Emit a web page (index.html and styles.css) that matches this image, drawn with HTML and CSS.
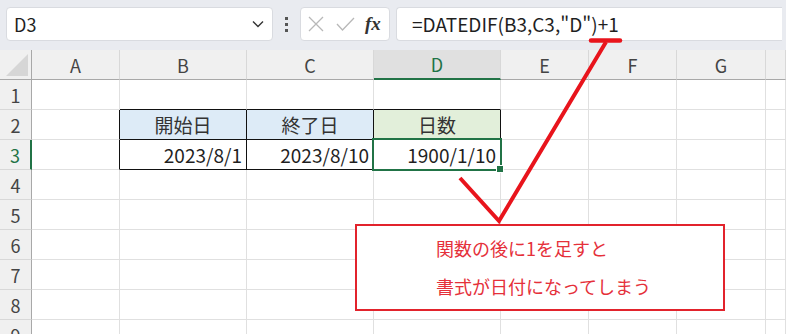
FILE: index.html
```html
<!DOCTYPE html>
<html lang="ja">
<head>
    <meta charset="UTF-8">
    <meta name="viewport" content="width=device-width, initial-scale=1.0">
    <title>DATEDIF</title>
    <link rel="stylesheet" href="styles.css">
</head>
<body>
    <div class="app">
        <div class="toolbar">
            <div class="namebox">
                <span>D3</span>
                <svg class="chevron" width="12" height="8" viewBox="0 0 12 8"><path d="M1 1.5 L6 6.5 L11 1.5" fill="none" stroke="#333" stroke-width="1.4"/></svg>
            </div>
            <div class="dots"><i></i><i></i><i></i></div>
            <div class="fxbox">
                <svg width="16" height="16" viewBox="0 0 16 16"><path d="M1 1 L15 15 M15 1 L1 15" stroke="#b8b8b8" stroke-width="1.3" fill="none"/></svg>
                <svg width="19" height="14" viewBox="0 0 19 14"><path d="M1 7 L6.5 13 L18 1" stroke="#b8b8b8" stroke-width="1.3" fill="none"/></svg>
                <span class="fx">fx</span>
            </div>
            <div class="formula">=DATEDIF(B3,C3,"D")+1</div>
        </div>

        <div class="sheet">
            <div class="hd corner"></div>
            <div class="hd col">A</div>
            <div class="hd col">B</div>
            <div class="hd col">C</div>
            <div class="hd col active">D</div>
            <div class="hd col">E</div>
            <div class="hd col">F</div>
            <div class="hd col">G</div>
            <div class="hd col"></div>

            <div class="hd row">1</div>
            <div class="c"></div>
            <div class="c tb"></div>
            <div class="c tb"></div>
            <div class="c tb"></div>
            <div class="c"></div><div class="c"></div><div class="c"></div><div class="c"></div>

            <div class="hd row">2</div>
            <div class="c tl"></div>
            <div class="c box blue center">開始日</div>
            <div class="c box blue center">終了日</div>
            <div class="c box green center">日数</div>
            <div class="c"></div><div class="c"></div><div class="c"></div><div class="c"></div>

            <div class="hd row active">3</div>
            <div class="c tl"></div>
            <div class="c box num">2023/8/1</div>
            <div class="c box num">2023/8/10</div>
            <div class="c box num selected">1900/1/10</div>
            <div class="c"></div><div class="c"></div><div class="c"></div><div class="c"></div>

            <div class="hd row">4</div>
            <div class="c"></div><div class="c"></div><div class="c"></div><div class="c"></div><div class="c"></div><div class="c"></div><div class="c"></div><div class="c"></div>
            <div class="hd row">5</div>
            <div class="c"></div><div class="c"></div><div class="c"></div><div class="c"></div><div class="c"></div><div class="c"></div><div class="c"></div><div class="c"></div>
            <div class="hd row">6</div>
            <div class="c"></div><div class="c"></div><div class="c"></div><div class="c"></div><div class="c"></div><div class="c"></div><div class="c"></div><div class="c"></div>
            <div class="hd row">7</div>
            <div class="c"></div><div class="c"></div><div class="c"></div><div class="c"></div><div class="c"></div><div class="c"></div><div class="c"></div><div class="c"></div>
            <div class="hd row">8</div>
            <div class="c"></div><div class="c"></div><div class="c"></div><div class="c"></div><div class="c"></div><div class="c"></div><div class="c"></div><div class="c"></div>
            <div class="hd row">9</div>
            <div class="c"></div><div class="c"></div><div class="c"></div><div class="c"></div><div class="c"></div><div class="c"></div><div class="c"></div><div class="c"></div>
        </div>

        <!-- annotation drawn over the sheet -->
        <svg class="arrow" width="786" height="334" viewBox="0 0 786 334">
            <polyline points="460,178 499,221 606,42" fill="none" stroke="#e8141c" stroke-width="4" stroke-linejoin="miter"/>
            <line x1="591" y1="40.5" x2="620" y2="40.5" stroke="#e8141c" stroke-width="4.5" stroke-linecap="round"/>
        </svg>
        <div class="note">
            <p>関数の後に1を足すと</p>
            <p>書式が日付になってしまう</p>
        </div>
    </div>
</body>
</html>
```

FILE: styles.css
```css
body {
    margin: 0;
    font-family: "Noto Sans CJK JP", "Noto Sans", sans-serif;
    color: #1f1f1f;
    background-color: white;
}
.app {
    position: relative;
    width: 786px;
    height: 334px;
    overflow: hidden;
}
.toolbar {
    display: flex;
    height: 50px;
    box-sizing: border-box;
    padding: 7px 0 0 6px;
    background-color: #e9ebf0;
}
.namebox {
    display: flex;
    align-items: center;
    justify-content: space-between;
    box-sizing: border-box;
    width: 267px;
    height: 34px;
    padding: 0 8px 0 7px;
    background-color: white;
    border: 1px solid #d9dbe0;
    border-radius: 4px;
    font-size: 18px;
}
.dots {
    display: flex;
    flex-direction: column;
    align-items: center;
    justify-content: center;
    gap: 3px;
    width: 27px;
    height: 34px;
}
.dots i {
    display: block;
    width: 3px;
    height: 3px;
    background-color: #555;
}
.fxbox {
    display: flex;
    align-items: center;
    gap: 12px;
    box-sizing: border-box;
    width: 90px;
    height: 34px;
    padding-left: 7px;
    background-color: white;
    border: 1px solid #d9dbe0;
    border-radius: 4px;
}
.fx {
    font-family: "Liberation Serif", serif;
    font-style: italic;
    font-weight: bold;
    font-size: 19px;
    color: #333;
    margin-left: -2px;
}
.formula {
    box-sizing: border-box;
    width: 386px;
    height: 34px;
    margin-left: 6px;
    padding-left: 15px;
    line-height: 32px;
    background-color: white;
    border: 1px solid #d9dbe0;
    border-right: none;
    border-radius: 4px 0 0 4px;
    font-size: 19px;
}
.sheet {
    display: grid;
    grid-template-columns: 32px 88px 127px 127px 127px 88px 88px 89px 1fr;
    grid-template-rows: 30px;
    grid-auto-rows: 30px;
}
.hd {
    display: flex;
    align-items: center;
    justify-content: center;
    box-sizing: border-box;
    background-color: #f0f0f0;
    color: #444;
    font-size: 18px;
}
.col {
    border-right: 1px solid #d8d8d8;
    border-bottom: 1px solid #a8a8a8;
}
.col.active {
    background-color: #e0e0e0;
    color: #217346;
    border-bottom: 2px solid #217346;
}
.row {
    border-right: 1px solid #a8a8a8;
    border-bottom: 1px solid #d8d8d8;
}
.row.active {
    color: #217346;
    border-right: 2px solid #217346;
}
.corner {
    position: relative;
    border-right: 1px solid #a8a8a8;
    border-bottom: 1px solid #a8a8a8;
}
.corner::after {
    content: "";
    position: absolute;
    right: 3px;
    bottom: 3px;
    border-style: solid;
    border-width: 0 0 22px 22px;
    border-color: transparent transparent #d6d6d6 transparent;
}
.c {
    display: flex;
    align-items: center;
    box-sizing: border-box;
    border-right: 1px solid #e0e0e0;
    border-bottom: 1px solid #e0e0e0;
    font-size: 19px;
}
.tb {
    border-bottom-color: #111;
}
.tl {
    border-right-color: #111;
}
.box {
    border-right-color: #111;
    border-bottom-color: #111;
}
.blue {
    background-color: #ddebf7;
}
.green {
    background-color: #e2efda;
}
.center {
    justify-content: center;
    color: #333;
}
.num {
    justify-content: flex-end;
    padding-right: 4px;
}
.selected {
    position: relative;
}
.selected::before {
    content: "";
    position: absolute;
    top: -2px;
    left: -2px;
    right: -2px;
    bottom: -2px;
    border: 2px solid #217346;
}
.selected::after {
    content: "";
    position: absolute;
    right: -4px;
    bottom: -4px;
    width: 6px;
    height: 6px;
    background-color: #217346;
    border: 1px solid white;
}
.arrow {
    position: absolute;
    top: 0;
    left: 0;
}
.note {
    position: absolute;
    left: 355px;
    top: 224px;
    box-sizing: border-box;
    width: 370px;
    height: 87px;
    padding: 3px 0 0 79px;
    background-color: white;
    border: 2px solid #e2232c;
    color: #e5303a;
    font-size: 18px;
}
.note p {
    margin: 0;
    line-height: 38px;
}
```
